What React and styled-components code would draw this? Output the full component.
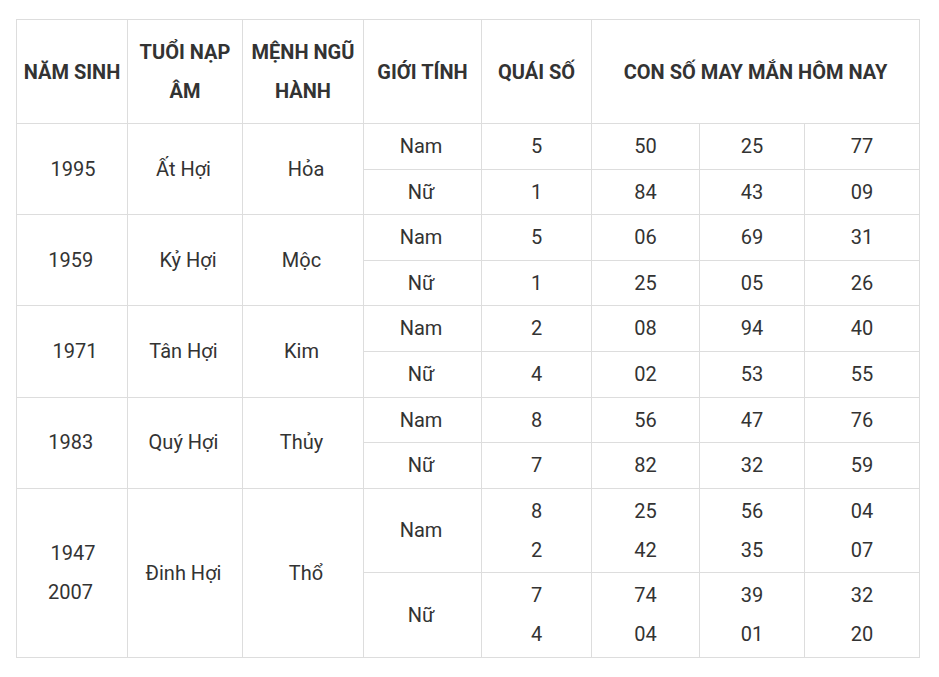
import React from 'react';
import styled, { createGlobalStyle } from 'styled-components';

const GlobalStyle = createGlobalStyle`
  body {
    margin: 0;
    background: #fff;
    font-family: Roboto, "Liberation Sans", sans-serif;
    color: #333;
  }
`;

const Page = styled.div`
  padding: 19px 0 0 16px;
`;

const Table = styled.table`
  border-collapse: collapse;
  table-layout: fixed;
  width: 903px;
  font-size: 20px;
`;

const HeadCell = styled.th`
  border: 1px solid #dddddd;
  padding: 13px 4px 12px;
  line-height: 39px;
  font-weight: 700;
  color: #333;
  text-align: center;
  vertical-align: middle;
`;

const Cell = styled.td`
  border: 1px solid #dddddd;
  padding: 3px 4px 2.6px;
  line-height: 39px;
  font-weight: 400;
  text-align: center;
  vertical-align: middle;
`;

const Line = styled.span`
  display: block;
  padding-left: ${(p) => (p.$shift > 0 ? p.$shift * 2 : 0)}px;
  padding-right: ${(p) => (p.$shift < 0 ? -p.$shift * 2 : 0)}px;
`;

const widths = [111, 115, 121, 118, 110, 108, 105, 115];

const groups = [
  {
    year: [['1995', 1]],
    tuoi: ['Ất Hợi', -1.5],
    menh: ['Hỏa', 3],
    rows: [
      { sex: 'Nam', quai: ['5'], nums: [['50'], ['25'], ['77']] },
      { sex: 'Nữ', quai: ['1'], nums: [['84'], ['43'], ['09']] },
    ],
  },
  {
    year: [['1959', -1.3]],
    tuoi: ['Kỷ Hợi', 3],
    menh: ['Mộc', -1.5],
    rows: [
      { sex: 'Nam', quai: ['5'], nums: [['06'], ['69'], ['31']] },
      { sex: 'Nữ', quai: ['1'], nums: [['25'], ['05'], ['26']] },
    ],
  },
  {
    year: [['1971', 3]],
    tuoi: ['Tân Hợi', -1.5],
    menh: ['Kim', -1.5],
    rows: [
      { sex: 'Nam', quai: ['2'], nums: [['08'], ['94'], ['40']] },
      { sex: 'Nữ', quai: ['4'], nums: [['02'], ['53'], ['55']] },
    ],
  },
  {
    year: [['1983', -1.3]],
    tuoi: ['Quý Hợi', -1.5],
    menh: ['Thủy', -1.5],
    rows: [
      { sex: 'Nam', quai: ['8'], nums: [['56'], ['47'], ['76']] },
      { sex: 'Nữ', quai: ['7'], nums: [['82'], ['32'], ['59']] },
    ],
  },
  {
    year: [['1947', 1], ['2007', -1.5]],
    tuoi: ['Đinh Hợi', -1.5],
    menh: ['Thổ', 3],
    rows: [
      { sex: 'Nam', quai: ['8', '2'], nums: [['25', '42'], ['56', '35'], ['04', '07']] },
      { sex: 'Nữ', quai: ['7', '4'], nums: [['74', '04'], ['39', '01'], ['32', '20']] },
    ],
  },
];

const Lines = ({ items, shift = 0 }) =>
  items.map((t, i) =>
    Array.isArray(t) ? (
      <Line key={i} $shift={t[1]}>{t[0]}</Line>
    ) : (
      <Line key={i} $shift={shift}>{t}</Line>
    )
  );

export default function App() {
  return (
    <Page>
      <GlobalStyle />
      <Table>
        <colgroup>
          {widths.map((w, i) => (
            <col key={i} style={{ width: w }} />
          ))}
        </colgroup>
        <thead>
          <tr>
            <HeadCell>NĂM SINH</HeadCell>
            <HeadCell>TUỔI NẠP<br />ÂM</HeadCell>
            <HeadCell>MỆNH NGŨ<br />HÀNH</HeadCell>
            <HeadCell>GIỚI TÍNH</HeadCell>
            <HeadCell>QUÁI SỐ</HeadCell>
            <HeadCell colSpan={3}>CON SỐ MAY MẮN HÔM NAY</HeadCell>
          </tr>
        </thead>
        <tbody>
          {groups.map((g) =>
            g.rows.map((r, ri) => (
              <tr key={g.year[0][0] + r.sex}>
                {ri === 0 && (
                  <>
                    <Cell rowSpan={2}>
                      <Lines items={g.year} />
                    </Cell>
                    <Cell rowSpan={2}>
                      <Lines items={[g.tuoi]} />
                    </Cell>
                    <Cell rowSpan={2}>
                      <Lines items={[g.menh]} />
                    </Cell>
                  </>
                )}
                <Cell>
                  <Lines items={[r.sex]} shift={-1.5} />
                </Cell>
                <Cell>
                  <Lines items={r.quai} />
                </Cell>
                {r.nums.map((n, ni) => (
                  <Cell key={ni}>
                    <Lines items={n} />
                  </Cell>
                ))}
              </tr>
            ))
          )}
        </tbody>
      </Table>
    </Page>
  );
}
